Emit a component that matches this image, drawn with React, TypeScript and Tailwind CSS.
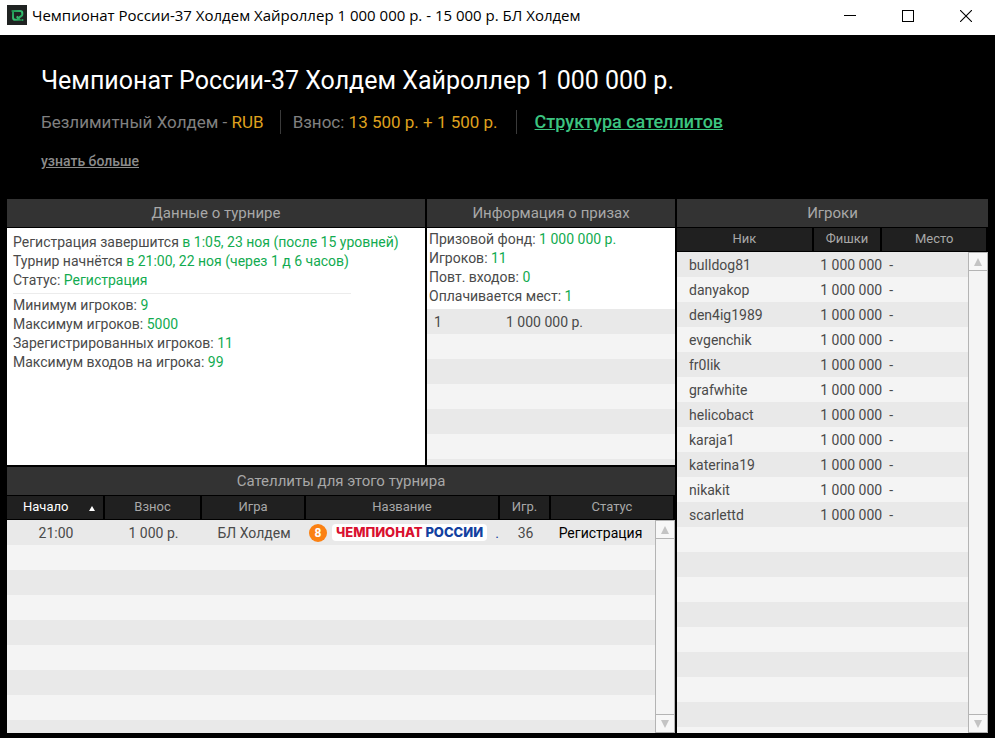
import type { ReactNode } from "react";
import clsx from "clsx";

type Column = {
  label: string;
  width: string;
};

type Satellite = {
  start: string;
  buyIn: string;
  game: string;
  players: number;
  status: string;
};

const players = [
  "bulldog81",
  "danyakop",
  "den4ig1989",
  "evgenchik",
  "fr0lik",
  "grafwhite",
  "helicobact",
  "karaja1",
  "katerina19",
  "nikakit",
  "scarlettd",
];

const satellites: Satellite[] = [
  { start: "21:00", buyIn: "1 000 р.", game: "БЛ Холдем", players: 36, status: "Регистрация" },
];

const playerColumns: Column[] = [
  { label: "Ник", width: "w-[44%]" },
  { label: "Фишки", width: "w-[22%]" },
  { label: "Место", width: "w-[34%]" },
];

const satelliteColumns: Column[] = [
  { label: "Начало", width: "w-[98px]" },
  { label: "Взнос", width: "w-[97px]" },
  { label: "Игра", width: "w-[104px]" },
  { label: "Название", width: "" },
  { label: "Игр.", width: "w-[51px]" },
  { label: "Статус", width: "w-[124px]" },
];

const stripes =
  "bg-[repeating-linear-gradient(to_bottom,#e9e9e9_0px,#e9e9e9_25px,#f4f4f4_25px,#f4f4f4_50px)]";

function AppLogo() {
  return (
    <svg viewBox="0 0 20 20" className="size-5 shrink-0" aria-hidden="true">
      <defs>
        <linearGradient id="logo" x1="0" y1="0" x2="1" y2="1">
          <stop offset="0" stopColor="#1f8f50" />
          <stop offset="0.6" stopColor="#35c473" />
          <stop offset="1" stopColor="#1c8a4a" />
        </linearGradient>
      </defs>
      <rect width="20" height="20" fill="#202322" />
      <path
        d="M4.6 5.9H13.2Q15.3 5.9 15.3 8V9.4Q15.3 10.6 14.2 11.2L12 12.6M6 5.9V12.4Q6 14.8 8.4 14.8H12.6L9.8 11.4"
        fill="none"
        stroke="url(#logo)"
        strokeWidth="2"
      />
      <circle cx="15.4" cy="15" r="1.1" fill="#27a55d" />
    </svg>
  );
}

function TitleBar() {
  const button = "flex h-8 w-[58px] items-center justify-center";

  return (
    <header className="flex h-[35px] items-start bg-white pl-[7px] text-black">
      <div className="flex h-[30px] min-w-0 flex-1 items-center gap-[5px]">
        <AppLogo />
        <span className="truncate font-['Open_Sans','Noto_Sans',sans-serif] text-[15px]">
          Чемпионат России-37 Холдем Хайроллер 1 000 000 р. - 15 000 р. БЛ Холдем
        </span>
      </div>
      <button type="button" aria-label="Свернуть" className={button}>
        <svg viewBox="0 0 12 12" className="size-3" stroke="currentColor" shapeRendering="crispEdges">
          <path d="M0 5.5H12" />
        </svg>
      </button>
      <button type="button" aria-label="Развернуть" className={button}>
        <svg viewBox="0 0 12 12" className="size-3" fill="none" stroke="currentColor" shapeRendering="crispEdges">
          <path d="M.5 .5H11.5V11.5H.5Z" />
        </svg>
      </button>
      <button type="button" aria-label="Закрыть" className={button}>
        <svg viewBox="0 0 12 12" className="size-3" stroke="currentColor" strokeWidth="1.1">
          <path d="M0 0L12 12M12 0L0 12" />
        </svg>
      </button>
    </header>
  );
}

function Panel({ title, children }: { title: string; children: ReactNode }) {
  return (
    <section className="flex min-h-0 min-w-0 flex-col gap-px">
      <h2 className="h-7 shrink-0 bg-[#333333] text-center text-[15px] leading-7 text-[#a8a8a8]">
        {title}
      </h2>
      {children}
    </section>
  );
}

function Fact({ label, value }: { label: string; value: string }) {
  return (
    <p>
      {label} <span className="text-[#12ab50]">{value}</span>
    </p>
  );
}

function ScrollBar() {
  const button = "flex h-[18px] shrink-0 items-center justify-center bg-[#f7f7f7]";

  return (
    <div className="absolute top-6 right-0 bottom-0 flex w-5 flex-col border border-[#b4b4b4] bg-[#f4f4f4]">
      <button type="button" aria-label="Вверх" className={clsx(button, "border-b border-[#b4b4b4]")}>
        <svg viewBox="0 0 8 8" className="size-2" fill="#c4c4c4">
          <path d="M4 0L8 8H0Z" />
        </svg>
      </button>
      <div className="flex-1" />
      <button type="button" aria-label="Вниз" className={clsx(button, "border-t border-[#b4b4b4]")}>
        <svg viewBox="0 0 8 8" className="size-2" fill="#c4c4c4">
          <path d="M0 0H8L4 8Z" />
        </svg>
      </button>
    </div>
  );
}

function ColumnHeads({ columns, sorted }: { columns: Column[]; sorted?: string }) {
  return (
    <thead>
      <tr className="h-6 bg-[#202020] text-[13px] text-[#a8a8a8]">
        {columns.map((column) => (
          <th
            key={column.label}
            scope="col"
            aria-sort={column.label === sorted ? "ascending" : undefined}
            className={clsx(
              "border-r-2 border-b border-black p-0 font-normal",
              column.width,
              column.label === sorted && "text-white",
            )}
          >
            {column.label === sorted ? (
              <button type="button" className="flex w-full items-center justify-between pr-2 pl-4">
                {column.label}
                <svg viewBox="0 0 6 6" className="size-[6px]" fill="currentColor">
                  <path d="M3 1L6 6H0Z" />
                </svg>
              </button>
            ) : (
              column.label
            )}
          </th>
        ))}
      </tr>
    </thead>
  );
}

function PlayersTable() {
  return (
    <div className="relative flex-1 overflow-hidden bg-black">
      <div className={clsx("absolute inset-x-0 top-6 bottom-0", stripes)} />
      <table className="relative w-full table-fixed border-separate border-spacing-0 text-sm">
        <ColumnHeads columns={playerColumns} />
        <tbody>
          {players.map((nick) => (
            <tr key={nick} className="h-[25px]">
              <td className="p-0 pl-3">{nick}</td>
              <td className="p-0 text-right whitespace-nowrap">1 000 000</td>
              <td className="p-0 pl-[7px]">-</td>
            </tr>
          ))}
        </tbody>
      </table>
      <ScrollBar />
    </div>
  );
}

function SatellitesTable() {
  return (
    <div className="relative flex-1 overflow-hidden bg-black">
      <div className={clsx("absolute inset-x-0 top-6 bottom-0", stripes)} />
      <table className="relative w-full table-fixed border-separate border-spacing-0 text-center text-sm">
        <ColumnHeads columns={satelliteColumns} sorted="Начало" />
        <tbody>
          {satellites.map((row) => (
            <tr key={row.start} className="h-[25px] whitespace-nowrap">
              <td className="p-0">{row.start}</td>
              <td className="p-0">{row.buyIn}</td>
              <td className="p-0">{row.game}</td>
              <td className="p-0">
                <div className="flex items-center pl-[3px]">
                  <span className="flex size-[18px] shrink-0 items-center justify-center rounded-full bg-[#fb8113] text-xs font-bold text-white">
                    8
                  </span>
                  <span className="ml-[5px] rounded bg-white px-1 font-[Inter,sans-serif] text-[13px] leading-[17px] font-extrabold text-[#1240a0]">
                    <span className="text-[#d9102f]">ЧЕМПИОНАТ</span> РОССИИ
                  </span>
                  <span className="ml-2 text-[#1240a0]">.</span>
                </div>
              </td>
              <td className="p-0">{row.players}</td>
              <td className="p-0 pr-[25px] text-black">{row.status}</td>
            </tr>
          ))}
        </tbody>
      </table>
      <ScrollBar />
    </div>
  );
}

export default function App() {
  return (
    <div className="flex min-h-screen flex-col bg-black font-[Roboto,sans-serif] text-[#4a4a4a]">
      <TitleBar />

      <div className="flex h-[164px] shrink-0 flex-col items-start px-[41px] pt-7">
        <h1 className="text-[25px] leading-9 text-white">
          Чемпионат России-37 Холдем Хайроллер 1 000 000 р.
        </h1>
        <div className="mt-2 flex items-center text-[17px] leading-[30px] text-[#808080]">
          <p className="pr-4">
            Безлимитный Холдем - <span className="text-[#dfa01e]">RUB</span>
          </p>
          <p className="border-l border-[#3a3a3a] pr-[18px] pl-3 leading-6">
            Взнос: <span className="text-[#dfa01e]">13 500 р. + 1 500 р.</span>
          </p>
          <p className="border-l border-[#3a3a3a] pl-[18px] text-lg leading-6">
            <a href="#satellites" className="font-medium text-[#3cc480] underline">
              Структура сателлитов
            </a>
          </p>
        </div>
        <a href="#more" className="mt-[14px] text-sm leading-5 font-medium text-[#8c8c8c] underline">
          узнать больше
        </a>
      </div>

      <main className="grid flex-1 grid-cols-[668fr_311fr] gap-[2px] pr-[7px] pb-[5px] pl-[7px]">
        <div className="grid min-w-0 grid-rows-2 gap-[2px]">
          <div className="grid min-h-0 grid-cols-[418fr_248fr] gap-[2px]">
            <Panel title="Данные о турнире">
              <div className="flex-1 bg-white px-[6px] pt-[5px] text-sm leading-[19px]">
                <Fact label="Регистрация завершится" value="в 1:05, 23 ноя (после 15 уровней)" />
                <Fact label="Турнир начнётся" value="в 21:00, 22 ноя (через 1 д 6 часов)" />
                <Fact label="Статус:" value="Регистрация" />
                <hr className="mt-[3px] mb-[2px] w-5/6 border-[#ececec]" />
                <Fact label="Минимум игроков:" value="9" />
                <Fact label="Максимум игроков:" value="5000" />
                <Fact label="Зарегистрированных игроков:" value="11" />
                <Fact label="Максимум входов на игрока:" value="99" />
              </div>
            </Panel>

            <Panel title="Информация о призах">
              <div className="flex flex-1 flex-col bg-white">
                <div className="px-[2px] pt-[2px] pb-[3px] text-sm leading-[19px]">
                  <Fact label="Призовой фонд:" value="1 000 000 р." />
                  <Fact label="Игроков:" value="11" />
                  <Fact label="Повт. входов:" value="0" />
                  <Fact label="Оплачивается мест:" value="1" />
                </div>
                <div className={clsx("flex-1", stripes)}>
                  <table className="w-full table-fixed text-sm">
                    <tbody>
                      <tr className="h-[25px]">
                        <td className="w-[79px] p-0 pl-[7px]">1</td>
                        <td className="p-0">1 000 000 р.</td>
                      </tr>
                    </tbody>
                  </table>
                </div>
              </div>
            </Panel>
          </div>

          <Panel title="Сателлиты для этого турнира">
            <SatellitesTable />
          </Panel>
        </div>

        <Panel title="Игроки">
          <PlayersTable />
        </Panel>
      </main>
    </div>
  );
}
